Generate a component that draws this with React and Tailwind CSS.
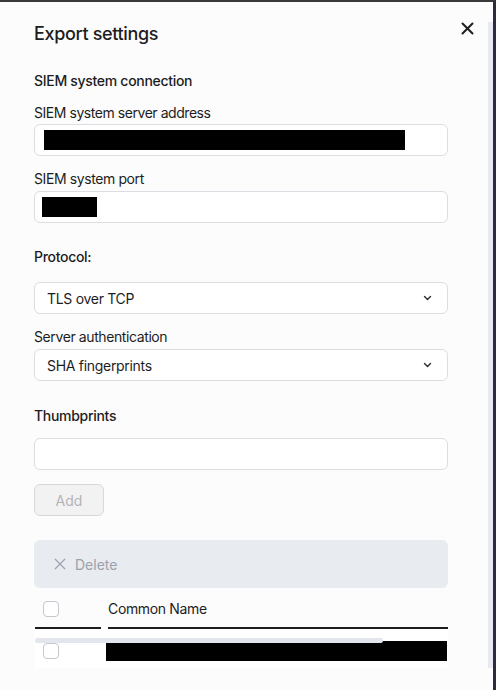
import React from "react";

const font = { fontFamily: "Inter, 'Noto Sans', sans-serif" };

function Chevron() {
  return (
    <svg width="9" height="6" viewBox="0 0 9 6" fill="none">
      <path d="M1.5 1.5 L4.5 4.5 L7.5 1.5" stroke="#2b2b2b" strokeWidth="1.4" strokeLinecap="round" strokeLinejoin="round" />
    </svg>
  );
}

function Select({ value }) {
  return (
    <div className="h-[32px] w-[414px] rounded-[6px] border border-[#dcdce2] bg-white flex items-center justify-between pl-[12px] pr-[15px] text-[14px] text-[#1d1d1f] tracking-[-0.3px]">
      <span>{value}</span>
      <Chevron />
    </div>
  );
}

function Checkbox() {
  return <div className="w-[16px] h-[16px] rounded-[4px] border border-[#c6c7cf] bg-white" />;
}

export default function App() {
  return (
    <div
      className="w-[496px] h-[690px] overflow-hidden bg-[#fcfcfc] border-t-2 border-t-[#3a3a3c] border-r-[3px] border-r-[#2f2a3d] flex flex-col"
      style={font}
    >
      <div className="flex mt-[20px] h-[646px]">
        <div className="flex-1 flex flex-col pl-[34px] overflow-hidden">
          <div className="flex justify-between items-start pr-[14px]">
            <h1 className="text-[18px] leading-[24px] font-medium text-[#1d1d1f] tracking-[-0.35px]">Export settings</h1>
            <svg width="13" height="13" viewBox="0 0 13 13">
              <path d="M1.5 1.5 L11.5 11.5 M11.5 1.5 L1.5 11.5" stroke="#1d1d1f" strokeWidth="2" strokeLinecap="round" />
            </svg>
          </div>

          <div className="mt-[25px] text-[14px] leading-[20px] font-medium text-[#1d1d1f] tracking-[-0.3px]">SIEM system connection</div>

          <div className="mt-[12px] text-[14px] leading-[20px] text-[#1d1d1f] tracking-[-0.45px]">SIEM system server address</div>
          <div className="mt-[1px] h-[32px] w-[414px] rounded-[6px] border border-[#dcdce2] bg-white flex items-center pl-[9px]">
            <div className="w-[361px] h-[20px] bg-black" />
          </div>

          <div className="mt-[13px] text-[14px] leading-[20px] text-[#1d1d1f] tracking-[-0.4px]">SIEM system port</div>
          <div className="mt-[2px] h-[32px] w-[414px] rounded-[6px] border border-[#dcdce2] bg-white flex items-center pl-[7px]">
            <div className="w-[55px] h-[20px] bg-black" />
          </div>

          <div className="mt-[24px] text-[14px] leading-[20px] font-medium text-[#1d1d1f] tracking-[-0.3px]">Protocol:</div>
          <div className="mt-[15px]">
            <Select value="TLS over TCP" />
          </div>

          <div className="mt-[13px] text-[14px] leading-[20px] text-[#1d1d1f] tracking-[-0.4px]">Server authentication</div>
          <div className="mt-[2px]">
            <Select value="SHA fingerprints" />
          </div>

          <div className="mt-[25px] text-[14px] leading-[20px] font-medium text-[#1d1d1f] tracking-[-0.3px]">Thumbprints</div>
          <div className="mt-[12px] h-[32px] w-[414px] rounded-[6px] border border-[#dcdce2] bg-white" />

          <button className="mt-[14px] h-[32px] w-[70px] rounded-[6px] border border-[#d8d8dc] bg-[#f2f2f3] text-[14px] text-[#b4b4b8]">
            Add
          </button>

          <div className="mt-[24px] h-[48px] w-[414px] rounded-[6px] bg-[#e8ebf0] flex items-center pl-[20px] gap-[9px] text-[14px] text-[#9ca1ab]">
            <svg width="12" height="12" viewBox="0 0 12 12">
              <path d="M1 1 L11 11 M11 1 L1 11" stroke="#9ca1ab" strokeWidth="1.2" />
            </svg>
            <span>Delete</span>
          </div>

          <div className="w-[414px] flex flex-col">
            <div className="flex h-[41px]">
              <div className="w-[66px] ml-[1px] border-b-2 border-[#1d1d1f] flex items-center pl-[8px] pt-[2px]">
                <Checkbox />
              </div>
              <div className="ml-[7px] w-[340px] border-b-2 border-[#1d1d1f] flex items-center text-[14px] text-[#1d1d1f] pt-[2px] tracking-[-0.35px]">
                Common Name
              </div>
            </div>
            <div className="relative bg-white h-[39px] flex items-start pt-[12px]">
              <div className="w-[72px] pl-[9px] pt-[2px]">
                <Checkbox />
              </div>
              <div className="w-[341px] h-[20px] bg-black" />
              <div className="absolute left-[1px] top-[9px] w-[348px] h-[5px] rounded-full bg-[#e3e6ec]" />
            </div>
          </div>
        </div>
        <div className="w-[5px] h-full bg-[#e7eaf0]" />
      </div>
    </div>
  );
}
